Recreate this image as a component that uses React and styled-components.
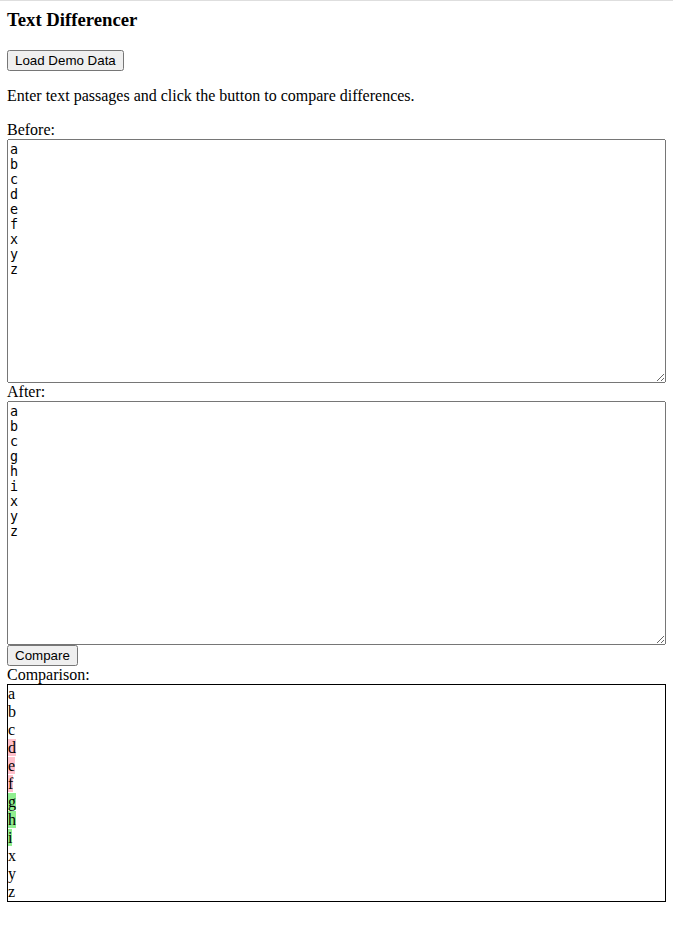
import React, { useState } from 'react';
import styled, { createGlobalStyle } from 'styled-components';

const GlobalStyle = createGlobalStyle`
  body {
    margin: 0;
    font-family: "Liberation Serif", "Times New Roman", serif;
    font-size: 16px;
    color: #000;
    background: #fff;
  }
`;

const Page = styled.div`
  border-top: 1px solid #dedede;
  padding: 8px 7px;
`;

const Title = styled.h3`
  font-size: 18.72px;
  font-weight: bold;
  margin: 0 0 18.72px;
`;

const Button = styled.button`
  font-family: "Liberation Sans", Arial, sans-serif;
  font-size: 13.333px;
  color: #000;
  display: block;
`;

const Intro = styled.p`
  margin: 16px 0;
`;

const Label = styled.div`
  line-height: 18px;
`;

const Input = styled.textarea`
  display: block;
  box-sizing: border-box;
  width: 100%;
  height: 244px;
  margin: 0;
  font-family: "DejaVu Sans Mono", monospace;
  font-size: 13.333px;
  line-height: 15px;
`;

const Output = styled.div`
  border: 1px solid #000;
  line-height: 18px;
`;

const Mark = styled.span`
  background: ${p => (p.kind === 'del' ? 'pink' : p.kind === 'add' ? 'lightgreen' : 'transparent')};
`;

// plain LCS line diff
function diffLines(a, b) {
  const x = a.split('\n');
  const y = b.split('\n');
  const t = Array.from({ length: x.length + 1 }, () => new Array(y.length + 1).fill(0));
  for (let i = x.length - 1; i >= 0; i--)
    for (let j = y.length - 1; j >= 0; j--)
      t[i][j] = x[i] === y[j] ? t[i + 1][j + 1] + 1 : Math.max(t[i + 1][j], t[i][j + 1]);
  const out = [];
  let i = 0, j = 0;
  while (i < x.length && j < y.length) {
    if (x[i] === y[j]) { out.push({ text: x[i], kind: 'same' }); i++; j++; }
    else if (t[i + 1][j] >= t[i][j + 1]) { out.push({ text: x[i], kind: 'del' }); i++; }
    else { out.push({ text: y[j], kind: 'add' }); j++; }
  }
  while (i < x.length) out.push({ text: x[i++], kind: 'del' });
  while (j < y.length) out.push({ text: y[j++], kind: 'add' });
  return out;
}

const DEMO_BEFORE = 'a\nb\nc\nd\ne\nf\nx\ny\nz';
const DEMO_AFTER = 'a\nb\nc\ng\nh\ni\nx\ny\nz';

export default function App() {
  const [before, setBefore] = useState(DEMO_BEFORE);
  const [after, setAfter] = useState(DEMO_AFTER);
  const [result, setResult] = useState(diffLines(DEMO_BEFORE, DEMO_AFTER));

  const loadDemo = () => {
    setBefore(DEMO_BEFORE);
    setAfter(DEMO_AFTER);
  };

  return (
    <Page>
      <GlobalStyle />
      <Title>Text Differencer</Title>
      <Button onClick={loadDemo}>Load Demo Data</Button>
      <Intro>Enter text passages and click the button to compare differences.</Intro>
      <Label>Before:</Label>
      <Input value={before} onChange={e => setBefore(e.target.value)} />
      <Label>After:</Label>
      <Input value={after} onChange={e => setAfter(e.target.value)} />
      <Button onClick={() => setResult(diffLines(before, after))}>Compare</Button>
      <Label>Comparison:</Label>
      <Output>
        {result.map((line, k) => (
          <div key={k}>
            <Mark kind={line.kind}>{line.text}</Mark>
          </div>
        ))}
      </Output>
    </Page>
  );
}
